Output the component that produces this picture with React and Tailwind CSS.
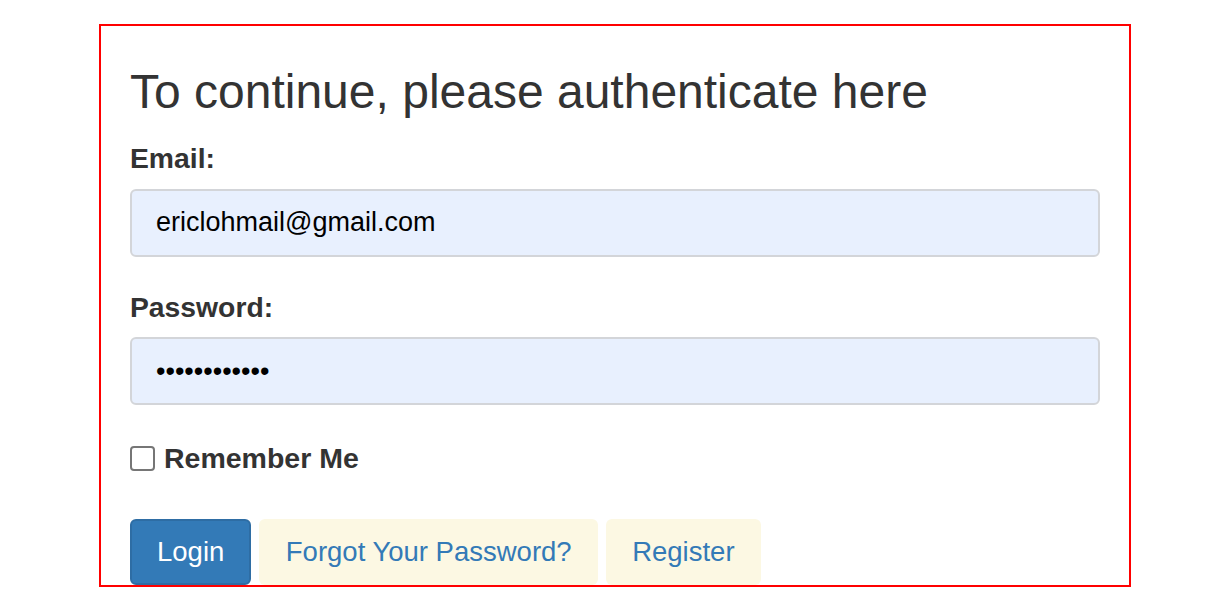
function Field({ id, label, type, value, className = 'mb-[31px]' }) {
  return (
    <div className={className}>
      <label
        htmlFor={id}
        className="mb-[11px] block text-[28.3px] leading-[38.6px] font-bold text-[#333]"
      >
        {label}
      </label>
      <input
        id={id}
        type={type}
        defaultValue={value}
        readOnly
        className="block h-[68px] w-full rounded-[6px] border-2 border-[#d3d5d9] bg-[#e8f0fe] px-[24px] text-[27px] text-black outline-none"
      />
    </div>
  );
}

export default function App() {
  return (
    <div className="min-h-[612px] bg-white pt-[24px] font-['Liberation_Sans',Arial,sans-serif]">
      <div className="mx-auto h-[563px] w-[1032px] overflow-hidden border-2 border-[#ff0000] px-[29px] pt-[39px]">
        <h2 className="mb-[21px] text-[48px] leading-[53px] font-normal text-[#333]">
          To continue, please authenticate here
        </h2>

        <form autoComplete="off" onSubmit={(e) => e.preventDefault()}>
          <Field id="email" label="Email:" type="text" value="ericlohmail@gmail.com" />
          <Field
            id="password"
            label="Password:"
            type="password"
            value="secretpasswd"
            className="mb-[34px]"
          />

          <label className="flex items-center gap-[9px] text-[28.5px] leading-[38.6px] font-bold text-[#333]">
            <span className="block h-[25px] w-[25px] rounded-[4px] border-2 border-[#767676] bg-white" />
            Remember Me
          </label>

          <div className="mt-[41px] flex gap-[8px]">
            <button
              type="submit"
              className="h-[66px] rounded-[6px] border-2 border-[#2e6da4] bg-[#337ab7] px-[25px] text-[27.5px] text-white"
            >
              Login
            </button>
            <button
              type="button"
              className="h-[66px] rounded-[6px] bg-[#fcf8e3] px-[26.5px] text-[27.5px] text-[#337ab7]"
            >
              Forgot Your Password?
            </button>
            <button
              type="button"
              className="h-[66px] rounded-[6px] bg-[#fcf8e3] px-[26px] text-[27.5px] text-[#337ab7]"
            >
              Register
            </button>
          </div>
        </form>
      </div>
    </div>
  );
}
